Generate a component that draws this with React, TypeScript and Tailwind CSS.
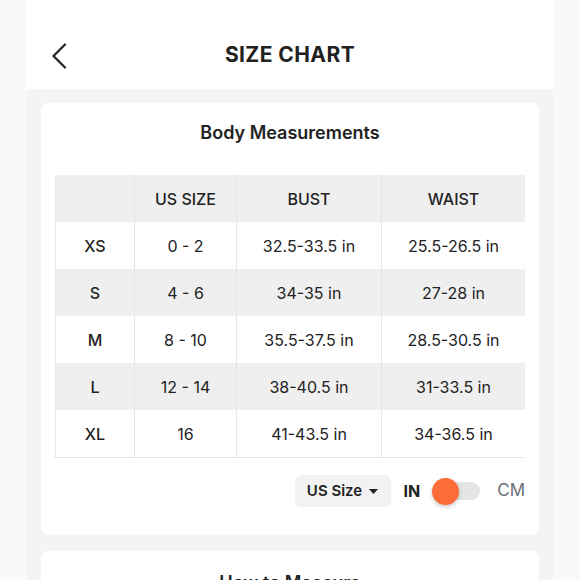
import React, { useState } from 'react';

const rows = [
  { size: 'XS', us: '0 - 2', bust: '32.5-33.5 in', waist: '25.5-26.5 in' },
  { size: 'S', us: '4 - 6', bust: '34-35 in', waist: '27-28 in' },
  { size: 'M', us: '8 - 10', bust: '35.5-37.5 in', waist: '28.5-30.5 in' },
  { size: 'L', us: '12 - 14', bust: '38-40.5 in', waist: '31-33.5 in' },
  { size: 'XL', us: '16', bust: '41-43.5 in', waist: '34-36.5 in' },
];

const cell = 'h-[47px] flex items-center justify-center border-l border-[#e6e6e6]';

export default function App() {
  const [metric, setMetric] = useState(false);

  return (
    <div className="min-h-[580px] h-[580px] overflow-hidden bg-[#f8f9fa] font-['Inter',sans-serif] text-[#222]">
      <div className="mx-auto w-[526px] h-full bg-[#f3f4f5]">
        {/* Header */}
        <div className="relative h-[89px] bg-white">
          <button className="absolute left-[24px] top-[43px] text-[#222]">
            <svg width="16" height="26" viewBox="0 0 16 26" fill="none">
              <path d="M14 1.5 L2.5 13 L14 24.5" stroke="currentColor" strokeWidth="2.2" strokeLinecap="round" strokeLinejoin="round" />
            </svg>
          </button>
          <h1 className="pt-[41px] text-center text-[21px] leading-[28px] font-bold tracking-[0.02em]">SIZE CHART</h1>
        </div>

        <div className="px-[14px] pt-[14px] flex flex-col gap-[16px]">
          {/* Body measurements card */}
          <div className="bg-white rounded-[8px] pt-[18px] pb-[28px] px-[14px]">
            <h2 className="text-center text-[18px] leading-[24px] font-semibold">Body Measurements</h2>

            <div className="mt-[30px] w-[470px] overflow-hidden border-b border-[#e6e6e6]">
              <div className="grid grid-cols-[79px_102px_145px_144px] text-[16px]">
                <div className={`${cell} bg-[#efefef]`} />
                <div className={`${cell} bg-[#efefef] font-medium`}>US SIZE</div>
                <div className={`${cell} bg-[#efefef] font-medium`}>BUST</div>
                <div className={`${cell} bg-[#efefef] font-medium`}>WAIST</div>
                {rows.map((r, i) => {
                  const bg = i % 2 === 1 ? 'bg-[#efefef]' : 'bg-white';
                  return (
                    <React.Fragment key={r.size}>
                      <div className={`${cell} ${bg} font-medium`}>{r.size}</div>
                      <div className={`${cell} ${bg}`}>{r.us}</div>
                      <div className={`${cell} ${bg}`}>{r.bust}</div>
                      <div className={`${cell} ${bg}`}>{r.waist}</div>
                    </React.Fragment>
                  );
                })}
              </div>
            </div>

            {/* Controls */}
            <div className="mt-[17px] w-[470px] flex items-center justify-end">
              <button className="h-[32px] w-[96px] rounded-[6px] bg-[#f2f2f2] flex items-center justify-center gap-[7px] text-[15px] font-semibold">
                US Size
                <svg width="9" height="5" viewBox="0 0 9 5"><path d="M0 0 L9 0 L4.5 5 Z" fill="#222" /></svg>
              </button>
              <span className="ml-[13px] text-[16px] font-bold">IN</span>
              <button
                onClick={() => setMetric(!metric)}
                className="ml-[12px] relative w-[48px] h-[27px] flex items-center"
              >
                <span className="ml-[9px] w-[39px] h-[18px] rounded-full bg-[#e5e5e5]" />
                <span className={`absolute top-0 ${metric ? 'left-[21px]' : 'left-0'} w-[27px] h-[27px] rounded-full bg-[#fd6b38] shadow-[0_2px_4px_rgba(0,0,0,0.2)]`} />
              </button>
              <span className="ml-[17px] text-[17px] text-[#6b6f75]">CM</span>
            </div>
          </div>

          {/* How to measure card */}
          <div className="bg-white rounded-[8px] pt-[20px] h-[80px]">
            <h2 className="text-center text-[18px] leading-[24px] font-semibold">How to Measure</h2>
          </div>
        </div>
      </div>
    </div>
  );
}
